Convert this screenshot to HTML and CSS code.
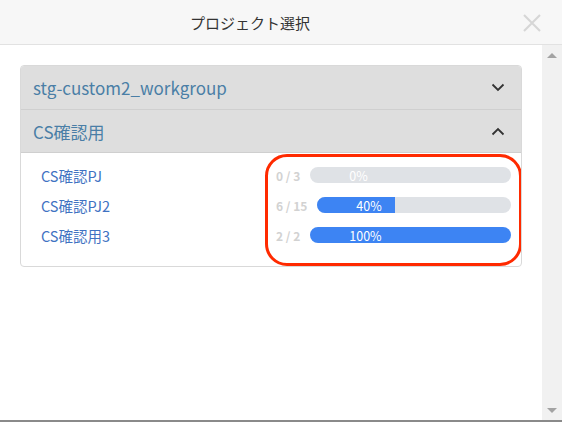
FILE: index.html
```html
<!DOCTYPE html>
<html lang="ja">
<head>
    <meta charset="UTF-8">
    <meta name="viewport" content="width=device-width, initial-scale=1.0">
    <title>プロジェクト選択</title>
    <link rel="stylesheet" href="styles.css">
</head>
<body>
    <div class="modal">
        <div class="modal-header">
            <h1 class="modal-title">プロジェクト選択</h1>
            <button class="close-btn" aria-label="閉じる">
                <svg width="18" height="18" viewBox="0 0 18 18">
                    <path d="M1 1 L17 17 M17 1 L1 17" stroke="#d6d6d6" stroke-width="2" fill="none"/>
                </svg>
            </button>
        </div>

        <div class="modal-main">
            <div class="modal-body">
                <div class="panel">
                    <div class="group-header">
                        <span class="group-name">stg-custom2_workgroup</span>
                        <svg class="chevron" width="14" height="9" viewBox="0 0 14 9">
                            <path d="M1.5 1.5 L7 7 L12.5 1.5" stroke="#333" stroke-width="1.8" fill="none"/>
                        </svg>
                    </div>
                    <div class="group-header">
                        <span class="group-name">CS確認用</span>
                        <svg class="chevron" width="14" height="9" viewBox="0 0 14 9">
                            <path d="M1.5 7.5 L7 2 L12.5 7.5" stroke="#333" stroke-width="1.8" fill="none"/>
                        </svg>
                    </div>
                    <div class="group-body">
                        <div class="project-row">
                            <a class="project-name" href="#">CS確認PJ</a>
                            <div class="progress-wrap">
                                <span class="count">0 / 3</span>
                                <div class="progress">
                                    <div class="progress-track">
                                        <div class="progress-fill" style="width: 0%"></div>
                                    </div>
                                    <span class="progress-label">0%</span>
                                </div>
                            </div>
                        </div>
                        <div class="project-row">
                            <a class="project-name" href="#">CS確認PJ2</a>
                            <div class="progress-wrap">
                                <span class="count">6 / 15</span>
                                <div class="progress">
                                    <div class="progress-track">
                                        <div class="progress-fill" style="width: 40%"></div>
                                    </div>
                                    <span class="progress-label">40%</span>
                                </div>
                            </div>
                        </div>
                        <div class="project-row">
                            <a class="project-name" href="#">CS確認用3</a>
                            <div class="progress-wrap">
                                <span class="count">2 / 2</span>
                                <div class="progress">
                                    <div class="progress-track">
                                        <div class="progress-fill" style="width: 100%"></div>
                                    </div>
                                    <span class="progress-label">100%</span>
                                </div>
                            </div>
                        </div>
                        <div class="highlight"></div>
                    </div>
                </div>
            </div>

            <div class="scrollbar">
                <span class="arrow arrow-up"></span>
                <span class="arrow arrow-down"></span>
            </div>
        </div>
    </div>
</body>
</html>
```

FILE: styles.css
```css
* {
    box-sizing: border-box;
}

body {
    margin: 0;
    background-color: #fff;
    font-family: "Noto Sans CJK JP", "Noto Sans", sans-serif;
    color: #333;
}

.modal {
    display: flex;
    flex-direction: column;
    height: 422px;
    border-bottom: 2px solid #8a8a8a;
}

.modal-header {
    position: relative;
    height: 45px;
    display: flex;
    align-items: center;
    justify-content: center;
    padding-right: 62px;
    background-color: #f7f7f7;
    border-bottom: 1px solid #e2e2e2;
}

.modal-title {
    margin: 0;
    font-size: 15px;
    font-weight: normal;
    color: #333;
}

.close-btn {
    position: absolute;
    right: 21px;
    top: 14px;
    padding: 0;
    border: none;
    background: none;
    line-height: 0;
}

.modal-main {
    flex: 1;
    display: flex;
}

.modal-body {
    flex: 1;
    padding: 20px 20px 0 20px;
}

.scrollbar {
    width: 20px;
    background-color: #f1f1f1;
    display: flex;
    flex-direction: column;
    justify-content: space-between;
    align-items: center;
    padding: 8px 0 7px;
}

.arrow {
    width: 0;
    height: 0;
    border-left: 5px solid transparent;
    border-right: 5px solid transparent;
}

.arrow-up {
    border-bottom: 5px solid #a3a3a3;
}

.arrow-down {
    border-top: 5px solid #a3a3a3;
}

/* group panel */
.panel {
    border: 1px solid #d9d9d9;
    border-radius: 4px;
    overflow: hidden;
}

.group-header {
    height: 44px;
    display: flex;
    align-items: center;
    justify-content: space-between;
    padding: 0 16px 0 12px;
    background-color: #dedede;
    border-bottom: 1px solid #cfcfcf;
}

.group-header + .group-header {
    height: 43px;
}

.group-name {
    font-family: "Source Sans Pro", "Noto Sans CJK JP", sans-serif;
    font-size: 17px;
    color: #4a7ea6;
}

.group-body {
    position: relative;
    padding: 7px 10px 16px 20px;
}

.project-row {
    height: 30px;
    display: flex;
    align-items: center;
}

.project-name {
    flex: 1;
    font-size: 14.5px;
    color: #3f72c2;
    text-decoration: none;
}

.progress-wrap {
    width: 235px;
    display: flex;
    align-items: center;
    gap: 10px;
}

.count {
    font-size: 12px;
    font-weight: 600;
    color: #d2d2d2;
    white-space: nowrap;
}

.progress {
    position: relative;
    flex: 1;
    height: 16px;
}

.progress-track {
    height: 100%;
    border-radius: 8px;
    background-color: #dfe2e6;
    overflow: hidden;
}

.progress-fill {
    height: 100%;
    background-color: #3d84f3;
}

.progress-label {
    position: absolute;
    left: 39px;
    top: 50%;
    transform: translateY(-50%);
    font-size: 12.5px;
    line-height: 1.2;
    color: #fff;
}

.highlight {
    position: absolute;
    left: 244px;
    top: 1px;
    width: 257px;
    height: 112px;
    border: 3px solid #ff2a00;
    border-radius: 22px;
}
```
